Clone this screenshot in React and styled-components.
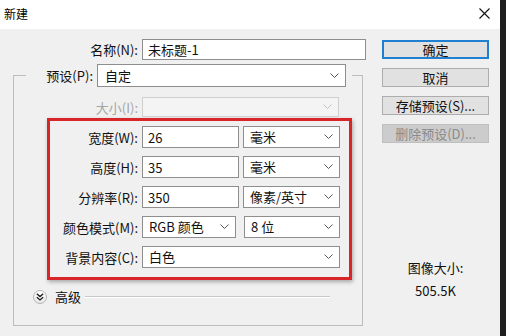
import React from 'react';
import styled, { createGlobalStyle } from 'styled-components';

const GlobalStyle = createGlobalStyle`
  html, body {
    margin: 0;
    padding: 0;
    background: #1f1f1f;
  }
  body {
    font-family: "Noto Sans CJK SC", "Noto Sans", sans-serif;
    font-size: 13px;
    color: #111;
  }
`;

const Chevron = ({ light }) => (
  <svg width="9" height="5" viewBox="0 0 9 5">
    <path d="M0.5 0.5 L4.5 4.5 L8.5 0.5" fill="none" stroke={light ? '#c4c4c4' : '#555'} strokeWidth="1" />
  </svg>
);

const CloseIcon = () => (
  <svg width="11" height="11" viewBox="0 0 11 11">
    <path d="M0.5 0.5 L10.5 10.5 M10.5 0.5 L0.5 10.5" stroke="#111" strokeWidth="1.1" />
  </svg>
);

const Field = ({ value, span }) => <TextBox $span={span}>{value}</TextBox>;

const Dropdown = ({ value, span, disabled, shift }) => (
  <SelectBox $span={span} $disabled={disabled} $shift={shift}>
    <span>{value}</span>
    <Chevron light={disabled} />
  </SelectBox>
);

const App = () => {
  return (
    <Frame>
      <GlobalStyle />
      <Dialog>
        <TitleBar>
          <span>新建</span>
          <CloseIcon />
        </TitleBar>

        <Body>
          <LeftPane>
            <NameRow>
              <Label>名称(N):</Label>
              <Field value="未标题-1" />
            </NameRow>

            <Group>
              <Legend>
                <LegendInner>
                  <Label>预设(P):</Label>
                  <PresetSelect>
                    <span>自定</span>
                    <Chevron />
                  </PresetSelect>
                </LegendInner>
              </Legend>

              <SizeRow>
                <Label $disabled>大小(I):</Label>
                <Dropdown value="" disabled />
              </SizeRow>

              <RedBox>
                <FormRow>
                  <Label>宽度(W):</Label>
                  <Field value="26" />
                  <Dropdown value="毫米" />
                </FormRow>
                <FormRow>
                  <Label>高度(H):</Label>
                  <Field value="35" />
                  <Dropdown value="毫米" />
                </FormRow>
                <FormRow>
                  <Label>分辨率(R):</Label>
                  <Field value="350" />
                  <Dropdown value="像素/英寸" />
                </FormRow>
                <FormRow $cols="88px 94px 100px">
                  <Label>颜色模式(M):</Label>
                  <Dropdown value="RGB 颜色" />
                  <Dropdown value="8 位" shift={4} />
                </FormRow>
                <FormRow>
                  <Label>背景内容(C):</Label>
                  <Dropdown value="白色" span />
                </FormRow>
              </RedBox>

              <AdvancedRow>
                <ExpandCircle>
                  <svg width="8" height="8" viewBox="0 0 8 8">
                    <path d="M0.8 0.8 L4 3.6 L7.2 0.8 M0.8 4.2 L4 7 L7.2 4.2" fill="none" stroke="#222" strokeWidth="1.3" />
                  </svg>
                </ExpandCircle>
                <span>高级</span>
                <Divider />
              </AdvancedRow>
            </Group>
          </LeftPane>

          <RightPane>
            <Button $primary>确定</Button>
            <Button>取消</Button>
            <Button>存储预设(S)...</Button>
            <Button $disabled>删除预设(D)...</Button>
            <Info>
              <div>图像大小:</div>
              <div>505.5K</div>
            </Info>
          </RightPane>
        </Body>
      </Dialog>
    </Frame>
  );
};

const Frame = styled.div`
  display: flex;
  width: 506px;
  height: 336px;
  overflow: hidden;
  background: #1f1f1f;
`;

const Dialog = styled.div`
  width: 500px;
  height: 336px;
  display: flex;
  flex-direction: column;
  background: #f0f0f0;
`;

const TitleBar = styled.div`
  flex: none;
  height: 29px;
  box-sizing: border-box;
  background: #fff;
  display: flex;
  align-items: center;
  justify-content: space-between;
  padding: 0 10px 2px 4px;
  font-size: 12px;
  color: #000;
`;

const Body = styled.div`
  flex: 1;
  display: flex;
`;

const LeftPane = styled.div`
  width: 370px;
  padding-top: 10px;
`;

const RightPane = styled.div`
  width: 107px;
  margin-left: 12px;
  padding-top: 11px;
  display: flex;
  flex-direction: column;
  gap: 9px;
`;

const Label = styled.div`
  text-align: right;
  white-space: nowrap;
  color: ${p => (p.$disabled ? '#a6a6a6' : '#111')};
`;

const boxBase = `
  box-sizing: border-box;
  height: 100%;
  display: flex;
  align-items: center;
  background: #fff;
  border: 1px solid #8e8e8e;
  white-space: nowrap;
  font-size: 13px;
`;

const TextBox = styled.div`
  ${boxBase}
  padding: 0 5px;
  ${p => p.$span && 'grid-column: span 2;'}
`;

const SelectBox = styled.div`
  ${boxBase}
  justify-content: space-between;
  padding: 0 6px 1px 6px;
  ${p => p.$span && 'grid-column: span 2;'}
  ${p => p.$shift && `margin-left: ${p.$shift}px;`}
  ${p => p.$disabled && 'background: #f4f4f4; border-color: #cfcfcf;'}
`;

const NameRow = styled.div`
  display: grid;
  grid-template-columns: 138px 224px;
  column-gap: 4px;
  align-items: center;
  height: 21px;
`;

const Group = styled.fieldset`
  margin: 4px 0 0 13px;
  padding: 0 0 21px 0;
  width: 350px;
  min-width: 0;
  box-sizing: border-box;
  border: 1px solid #bdbdbd;
`;

const Legend = styled.legend`
  margin-left: 12px;
  padding: 0 6px 0 19px;
`;

const LegendInner = styled.div`
  display: flex;
  align-items: center;
  gap: 4px;
  height: 23px;

  & > ${Label} {
    width: 48px;
  }
`;

const PresetSelect = styled.div`
  ${boxBase}
  width: 249px;
  justify-content: space-between;
  padding: 0 6px 1px 7px;
`;

const SizeRow = styled.div`
  display: grid;
  grid-template-columns: 124px 197px;
  column-gap: 4px;
  align-items: center;
  height: 20px;
  margin-top: 10px;
`;

const RedBox = styled.div`
  margin: 1px 0 0 33px;
  width: 305px;
  box-sizing: border-box;
  border: 3px solid #d7252a;
  box-shadow: 1px 2px 4px rgba(0, 0, 0, 0.3);
  padding: 5px 0 10px;
  display: flex;
  flex-direction: column;
  gap: 9px;
`;

const FormRow = styled.div`
  display: grid;
  grid-template-columns: ${p => p.$cols || '88px 97px 97px'};
  gap: 4px;
  align-items: center;
  height: 21px;
`;

const AdvancedRow = styled.div`
  display: flex;
  align-items: center;
  margin-top: 9px;
  padding-left: 19px;
  height: 15px;
  gap: 8px;
`;

const ExpandCircle = styled.div`
  width: 14px;
  height: 14px;
  box-sizing: border-box;
  border-radius: 50%;
  border: 1px solid #b5b5b5;
  background: linear-gradient(#ffffff, #e8e8e8);
  display: flex;
  align-items: center;
  justify-content: center;
`;

const Divider = styled.div`
  width: 245px;
  height: 1px;
  margin-left: -4px;
  background: #c9c9c9;
  box-shadow: 0 1px 0 #ffffff;
`;

const Button = styled.div`
  height: 19px;
  box-sizing: border-box;
  display: flex;
  align-items: center;
  justify-content: center;
  font-size: 13px;
  background: ${p => (p.$disabled ? '#cccccc' : '#e1e1e1')};
  border: 1px solid ${p => (p.$primary ? '#1f7fd0' : p.$disabled ? '#bfbfbf' : '#adadad')};
  box-shadow: ${p => (p.$primary ? 'inset 0 0 0 1px #1f7fd0' : 'none')};
  color: ${p => (p.$disabled ? '#8a8a8a' : '#111')};
`;

const Info = styled.div`
  margin-top: 104px;
  line-height: 23px;
  text-align: center;
  font-size: 13px;
  color: #111;
`;

export default App;
